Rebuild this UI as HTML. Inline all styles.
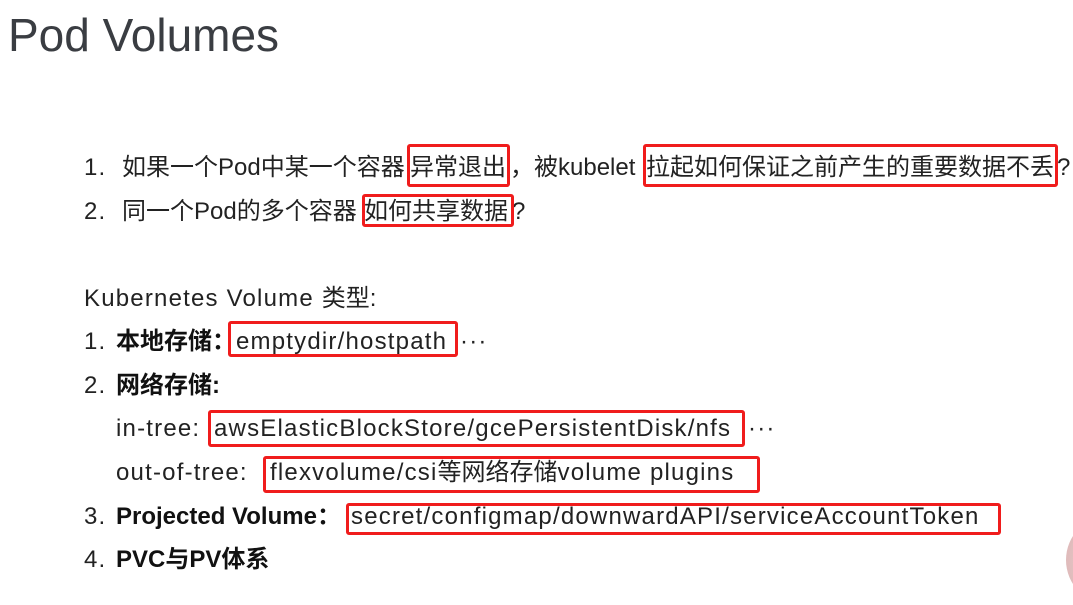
<!DOCTYPE html>
<html><head><meta charset="utf-8"><style>
body{margin:0;width:1073px;height:593px;background:#fff;position:relative;overflow:hidden;font-family:"Liberation Sans","Noto Sans CJK SC",sans-serif;color:#222;}
.t{position:absolute;white-space:nowrap;font-size:24px;line-height:30px;letter-spacing:1.2px;}
.b{position:absolute;border:3px solid #f01c1c;border-radius:3px;box-sizing:border-box;}
h1{position:absolute;left:8px;top:8px;margin:0;font-weight:normal;font-size:46px;color:#3a3d42;line-height:54px;}
.s{font-weight:bold;color:#111;letter-spacing:0}
.c{letter-spacing:0}
</style></head><body>
<h1>Pod Volumes</h1>
<div class="t" style="left:84px;top:153px">1.</div>
<div class="t c" style="left:122px;top:153px">如果一个Pod中某一个容器</div>
<div class="t c" style="left:410px;top:153px">异常退出</div>
<div class="t c" style="left:510px;top:153px">，被kubelet</div>
<div class="t c" style="left:646px;top:153px">拉起如何保证之前产生的重要数据不丢</div>
<div class="t" style="left:1057px;top:153px">?</div>
<div class="t" style="left:84px;top:197px">2.</div>
<div class="t c" style="left:122px;top:197px">同一个Pod的多个容器</div>
<div class="t c" style="left:364px;top:197px">如何共享数据</div>
<div class="t" style="left:512px;top:197px">?</div>
<div class="t" style="left:84px;top:284px">Kubernetes Volume <span class="c">类型:</span></div>
<div class="t" style="left:84px;top:327px">1.</div>
<div class="t s" style="left:116px;top:327px">本地存储：</div>
<div class="t" style="left:236px;top:327px">emptydir/hostpath</div>
<div class="t" style="left:460px;top:327px">···</div>
<div class="t" style="left:84px;top:371px">2.</div>
<div class="t s" style="left:116px;top:371px">网络存储:</div>
<div class="t" style="left:116px;top:414px">in-tree:</div>
<div class="t" style="left:214px;top:414px">awsElasticBlockStore/gcePersistentDisk/nfs</div>
<div class="t" style="left:748px;top:414px">···</div>
<div class="t" style="left:116px;top:458px">out-of-tree:</div>
<div class="t" style="left:270px;top:458px">flexvolume/csi<span class="c">等网络存储</span>volume plugins</div>
<div class="t" style="left:84px;top:502px">3.</div>
<div class="t s" style="left:116px;top:502px">Projected Volume：</div>
<div class="t" style="left:351px;top:502px">secret/configmap/downwardAPI/serviceAccountToken</div>
<div class="t" style="left:84px;top:545px">4.</div>
<div class="t s" style="left:116px;top:545px">PVC与PV体系</div>
<div class="b" style="left:407px;top:144px;width:103px;height:43px"></div>
<div class="b" style="left:643px;top:144px;width:415px;height:43px"></div>
<div class="b" style="left:362px;top:194px;width:152px;height:33px"></div>
<div class="b" style="left:228px;top:321px;width:230px;height:36px"></div>
<div class="b" style="left:208px;top:410px;width:537px;height:37px"></div>
<div class="b" style="left:263px;top:456px;width:497px;height:37px"></div>
<div class="b" style="left:346px;top:503px;width:655px;height:32px"></div>
<div style="position:absolute;left:1066px;top:515px;width:90px;height:90px;border-radius:50%;background:radial-gradient(circle at 60% 50%,#f4e4e4,#d9aeae)"></div>
</body></html>
